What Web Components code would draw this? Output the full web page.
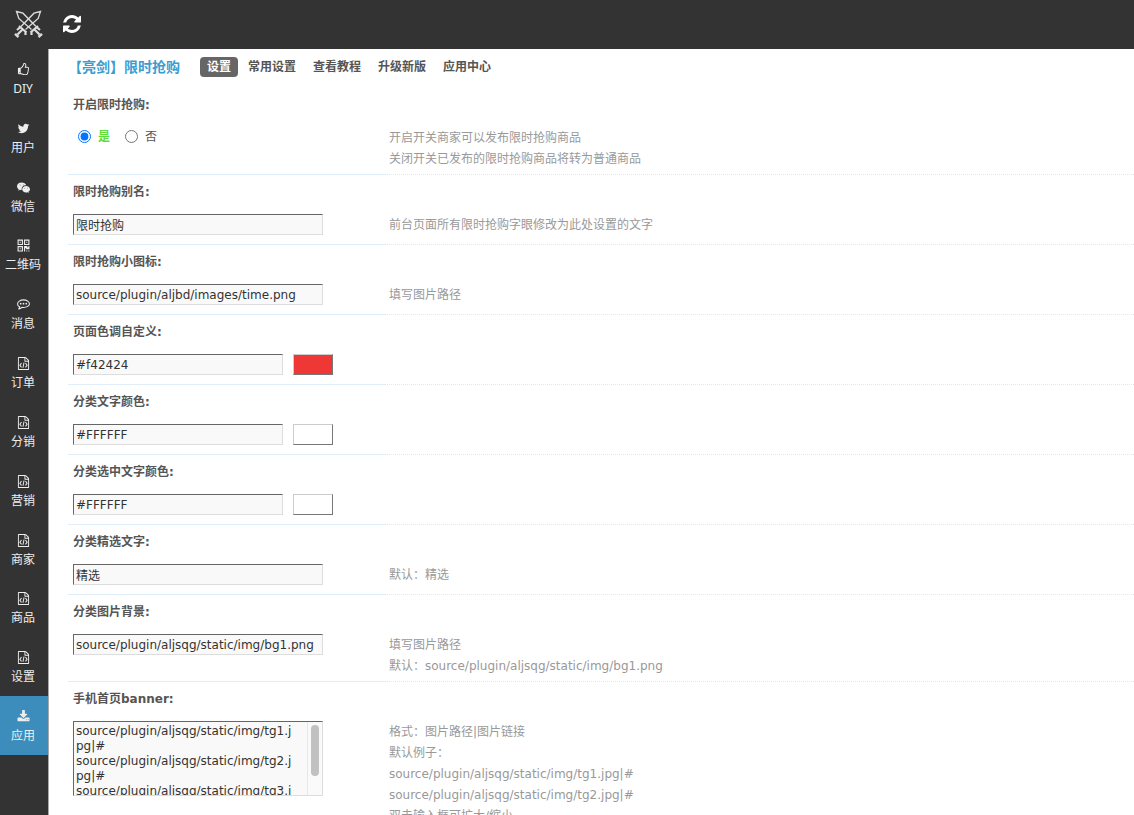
<!DOCTYPE html>
<html lang="zh-CN">
<head>
<meta charset="utf-8">
<title>限时抢购 - 设置</title>
<style>
html, body { margin: 0; height: 100%; }
body { font: 12px/21px "DejaVu Sans", "Noto Sans CJK SC", sans-serif; color: #555; background: #fff; }
</style>
</head>
<body>
<admin-shell>
  <app-header slot="header"></app-header>
  <side-nav slot="nav">
    <nav-item icon="thumb">DIY</nav-item>
    <nav-item icon="twitter">用户</nav-item>
    <nav-item icon="wechat">微信</nav-item>
    <nav-item icon="qrcode">二维码</nav-item>
    <nav-item icon="comment">消息</nav-item>
    <nav-item icon="file">订单</nav-item>
    <nav-item icon="file">分销</nav-item>
    <nav-item icon="file">营销</nav-item>
    <nav-item icon="file">商家</nav-item>
    <nav-item icon="file">商品</nav-item>
    <nav-item icon="file">设置</nav-item>
    <nav-item icon="download" active>应用</nav-item>
  </side-nav>
  <page-tabs heading="【亮剑】限时抢购">
    <tab-link active>设置</tab-link>
    <tab-link>常用设置</tab-link>
    <tab-link>查看教程</tab-link>
    <tab-link>升级新版</tab-link>
    <tab-link>应用中心</tab-link>
  </page-tabs>
  <setting-row type="radio" label="开启限时抢购:">开启开关商家可以发布限时抢购商品<br>关闭开关已发布的限时抢购商品将转为普通商品</setting-row>
  <setting-row type="text" label="限时抢购别名:" value="限时抢购">前台页面所有限时抢购字眼修改为此处设置的文字</setting-row>
  <setting-row type="text" label="限时抢购小图标:" value="source/plugin/aljbd/images/time.png">填写图片路径</setting-row>
  <setting-row type="color" label="页面色调自定义:" value="#f42424" swatch="#ef3835"></setting-row>
  <setting-row type="color" label="分类文字颜色:" value="#FFFFFF" swatch="#fff"></setting-row>
  <setting-row type="color" label="分类选中文字颜色:" value="#FFFFFF" swatch="#fff"></setting-row>
  <setting-row type="text" label="分类精选文字:" value="精选">默认：精选</setting-row>
  <setting-row type="text" label="分类图片背景:" value="source/plugin/aljsqg/static/img/bg1.png">填写图片路径<br>默认：source/plugin/aljsqg/static/img/bg1.png</setting-row>
  <setting-row type="textarea" label="手机首页banner:" value="source/plugin/aljsqg/static/img/tg1.jpg|#&#10;source/plugin/aljsqg/static/img/tg2.jpg|#&#10;source/plugin/aljsqg/static/img/tg3.jpg|#&#10;">格式：图片路径|图片链接<br>默认例子：<br>source/plugin/aljsqg/static/img/tg1.jpg|#<br>source/plugin/aljsqg/static/img/tg2.jpg|#<br>双击输入框可扩大/缩小</setting-row>
</admin-shell>

<script>
const ICONS = {
  refresh: ['0 128 1536 1536', '<path d="M1511 1056q0 5-1 7-64 268-268 434.500t-478 166.500q-146 0-282.500-55t-243.500-157l-129 129q-19 19-45 19t-45-19-19-45v-448q0-26 19-45t45-19h448q26 0 45 19t19 45-19 45l-137 137q71 66 161 102t187 36q134 0 250-65t186-179q11-17 53-117 8-23 30-23h192q13 0 22.500 9.500t9.500 22.500zm25-800v448q0 26-19 45t-45 19h-448q-26 0-45-19t-19-45 19-45l138-138q-148-137-349-137-134 0-250 65t-186 179q-11 17-53 117-8 23-30 23h-199q-13 0-22.500-9.500t-9.500-22.500v-7q65-268 270-434.500t480-166.500q146 0 284 55.500t245 156.500l130-129q19-19 45-19t45 19 19 45z"/>'],
  thumb: ['0 0 1792 1792', '<path d="M384 1344q0-26-19-45t-45-19-45 19-19 45 19 45 45 19 45-19 19-45zm1152-576q0-51-39-89.500t-89-38.500h-352q0-58 48-159.500t48-160.500q0-98-32-145t-128-47q-26 26-38 85t-30.500 125.500-59.500 109.500q-22 23-77 91-4 5-23 30t-31.500 41-34.500 42.500-40 44-38.500 35.500-40 27-35.500 9h-32v640h32q13 0 31.500 3t33 6.500 38 11 35 11.500 35.500 12.500 29 10.500q211 73 342 73h121q192 0 192-167 0-26-5-56 30-16 47.500-52.500t17.500-73.500-18-69q53-50 53-119 0-25-10-55.500t-25-47.500q32-1 53.500-47t21.500-81zm128-1q0 89-49 163 9 33 9 69 0 77-38 144 3 21 3 43 0 101-60 178 1 139-85 219.500t-227 80.500h-129q-96 0-189.500-22.500t-216.500-65.500q-116-40-138-40h-288q-53 0-90.500-37.500t-37.500-90.500v-640q0-53 37.500-90.500t90.500-37.500h274q36-24 137-155 58-75 107-128 24-25 35.500-85.500t30.500-126.500 62-108q39-37 90-37 84 0 151 32.500t102 101.500 35 186q0 93-48 192h176q104 0 180 76t76 179z"/>'],
  twitter: ['0 0 1792 1792', '<path d="M1684 408q-67 98-162 167 1 14 1 42 0 130-38 259.500t-115.500 248.500-184.500 210.500-258 146-323 54.500q-271 0-496-145 35 4 78 4 225 0 401-138-105-2-188-64.500t-114-159.500q33 5 61 5 43 0 85-11-112-23-185.500-111.500t-73.500-205.500v-4q68 38 146 41-66-44-105-115t-39-154q0-88 44-163 121 149 294.500 238.500t371.500 99.500q-8-38-8-74 0-134 94.500-228.500t228.500-94.500q140 0 236 102 109-21 205-78-37 115-142 178 93-10 186-50z"/>'],
  wechat: ['0 0 14 14', '<path fill-rule="evenodd" d="M5 1.500C2.200 1.500 0 3.300 0 5.600c0 1.300.7 2.400 1.800 3.200L1.300 10.400l1.800-1c.7.200 1.300.3 2 .3-.6-2.800 1.600-5 4.900-5C9.500 2.800 7.500 1.500 5 1.500zM3.300 3.800a.5.500 0 1 1 0 1 .5.500 0 0 1 0-1zm3.400 0a.5.500 0 1 1 0 1 .5.500 0 0 1 0-1z"/><path fill-rule="evenodd" d="M9.800 5.300c-2.400 0-4.200 1.600-4.200 3.500s1.800 3.500 4.200 3.500c.5 0 1-.1 1.500-.2l1.400.8-.4-1.300c1-.7 1.700-1.700 1.700-2.800 0-1.900-1.900-3.500-4.200-3.500zM8.400 7.200a.4.400 0 1 1 0 .8.4.4 0 0 1 0-.8zm2.800 0a.4.400 0 1 1 0 .8.4.4 0 0 1 0-.8z"/>'],
  qrcode: ['128 128 1536 1536', '<path fill-rule="evenodd" d="M192 192h640v640h-640zM320 320v384h384v-384zM448 448h128v128h-128zM960 192h640v640h-640zM1088 320v384h384v-384zM1216 448h128v128h-128zM192 960h640v640h-640zM320 1088v384h384v-384zM448 1216h128v128h-128zM960 960h384v128h128v-128h128v384h-384v-128h-128v384h-128zM1216 1472h128v128h-128zM1472 1472h128v128h-128z"/>'],
  comment: ['0 0 1792 1792', '<path fill="none" stroke="currentColor" stroke-width="144" stroke-linejoin="round" d="M896 260c-460 0-820 255-820 550 0 180 110 325 310 420-20 110-80 200-150 280 180-30 330-110 440-220 75 10 150 16 220 16 460 0 820-230 820-496S1356 260 896 260z"/><circle cx="512" cy="790" r="120"/><circle cx="896" cy="790" r="120"/><circle cx="1280" cy="790" r="120"/>'],
  file: ['0 0 1792 1792', '<path d="M1596 380q28 28 48 76t20 88v1152q0 40-28 68t-68 28h-1344q-40 0-68-28t-28-68v-1600q0-40 28-68t68-28h896q40 0 88 20t76 48zm-444-244v376h376q-10-29-22-41l-313-313q-12-12-41-22zm384 1528v-1024h-416q-40 0-68-28t-28-68v-416h-768v1536h1280z"/><path fill="none" stroke="currentColor" stroke-width="140" d="M620 830L400 1130l220 300M1172 830l220 300-220 300M970 760L822 1480"/>'],
  download: ['0 0 1792 1792', '<path d="M1344 1344q0-26-19-45t-45-19-45 19-19 45 19 45 45 19 45-19 19-45zm256 0q0-26-19-45t-45-19-45 19-19 45 19 45 45 19 45-19 19-45zm128-224v320q0 40-28 68t-68 28h-1472q-40 0-68-28t-28-68v-320q0-40 28-68t68-28h465l135 136q58 56 136 56t136-56l136-136h464q40 0 68 28t28 68zm-325-569q17 41-14 70l-448 448q-18 19-45 19t-45-19l-448-448q-31-29-14-70 17-39 59-39h256v-448q0-26 19-45t45-19h256q26 0 45 19t19 45v448h256q42 0 59 39z"/>']
};
const svg = (name, size) => `<svg width="${size}" height="${size}" viewBox="${ICONS[name][0]}" fill="currentColor" aria-hidden="true">${ICONS[name][1]}</svg>`;

class Base extends HTMLElement {
  connectedCallback() {
    if (this.shadowRoot) return;
    this.attachShadow({ mode: 'open' }).innerHTML = this.render();
  }
}

customElements.define('admin-shell', class extends Base {
  render() {
    return `<style>
      :host { display: grid; grid-template: auto minmax(0, 1fr) / auto minmax(0, 1fr); height: 100vh; }
      slot[name=header] { display: block; grid-column: 1 / -1; }
      slot[name=nav] { display: block; }
      main { overflow-y: auto; scrollbar-width: none; padding-left: 19px; }
    </style>
    <slot name="header"></slot><slot name="nav"></slot><main><slot></slot></main>`;
  }
});

customElements.define('app-header', class extends Base {
  render() {
    const sword = `<path stroke-width="1.300" d="M17.500 20.500L4.800 9.500 2.500 2.500 9 4.200 22 17.500"/><path stroke-width="2.200" d="M16.500 23.500L24 17M20 20L25.500 25.500M17.500 22V26M22.500 18L26 21"/><path stroke-width="2.400" d="M24.500 28L28 24.800"/>`;
    return `<style>
      :host { display: block; background: #333; }
      header { display: flex; align-items: center; gap: 19px; height: 48px; padding: 0 14px 1px; }
      a, button { display: flex; color: #fff; background: none; border: 0; padding: 0; }
      a { color: #ddd; }
    </style>
    <header><a href="#" aria-label="首页"><svg width="30" height="30" viewBox="0 0 30 30" fill="none" stroke="currentColor">
      <g>${sword}</g><g transform="matrix(-1 0 0 1 29 0)">${sword}</g></svg></a>
      <button type="button" aria-label="刷新">${svg('refresh', 18)}</button></header>`;
  }
});

customElements.define('side-nav', class extends Base {
  render() {
    return `<style>
      :host { display: block; height: 100%; background: #333; border-right: 1px solid #aaa; width: 48px; }
      nav { display: grid; grid-template-rows: repeat(12, 1fr); height: 706px; }
    </style><nav><slot></slot></nav>`;
  }
});

customElements.define('nav-item', class extends Base {
  render() {
    return `<style>
      :host { display: block; }
      :host([active]) { background: #3c8dbc; }
      a { display: flex; flex-direction: column; align-items: center; gap: 4px; padding: 14px 2px 0 0; color: #eee;
          font: 12px/18px "Noto Sans", "Noto Sans CJK SC", sans-serif; text-decoration: none; white-space: nowrap; }
    </style><a href="#">${svg(this.getAttribute('icon'), 13)}<span><slot></slot></span></a>`;
  }
});

customElements.define('page-tabs', class extends Base {
  render() {
    return `<style>
      :host { display: flex; align-items: center; height: 35px; margin-bottom: 4px; }
      h1 { margin: 0 20px 0 0; font-size: 14px; line-height: 20px; color: #3c9dd0; white-space: nowrap; }
      nav { display: flex; gap: 3px; }
    </style><h1>${this.getAttribute('heading')}</h1><nav><slot></slot></nav>`;
  }
});

customElements.define('tab-link', class extends Base {
  render() {
    return `<style>
      :host { display: block; }
      a { display: block; padding: 0 7px; border-radius: 4px; font-weight: bold; line-height: 20px; color: #555; text-decoration: none; }
      :host([active]) a { background: #666; color: #fff; }
    </style><a href="#"><slot></slot></a>`;
  }
});

customElements.define('setting-row', class extends Base {
  render() {
    const type = this.getAttribute('type'), label = this.getAttribute('label'), value = this.getAttribute('value') || '';
    const controls = {
      radio: () => `<span class="radios" role="radiogroup" aria-labelledby="title">
        <input type="radio" name="enabled" id="yes" checked><label for="yes" class="on">是</label>
        <input type="radio" name="enabled" id="no"><label for="no">否</label></span>`,
      text: () => `<input class="box" type="text" id="field" value="${value}">`,
      color: () => `<input class="box short" type="text" id="field" value="${value}"><button type="button" aria-label="选择颜色" style="background:${this.getAttribute('swatch')}"></button>`,
      textarea: () => `<div class="box area"><textarea id="field">${value}</textarea><div class="track" aria-hidden="true"><div class="thumb"></div></div></div>`
    };
    const title = type === 'radio' ? `<span id="title" class="title">${label}</span>` : `<label class="title" for="field">${label}</label>`;
    return `<style>
      :host { display: grid; grid-template-columns: 316px minmax(0, 1fr); }
      .title { grid-column: 1 / -1; padding-left: 5px; font-weight: bold; line-height: 34px; color: #555; }
      .control { box-sizing: border-box; display: flex; align-items: flex-start; gap: 10px; padding: 5px 5px 9px; border-bottom: 1px solid #deeffb; }
      .hint { padding: 6px 5px 4px; color: #999; border-bottom: 1px dotted #d6ecfb; }
      .box { box-sizing: border-box; width: 250px; height: 21px; margin: 0; padding: 2px; border: 1px solid; border-color: #666 #ddd #ddd #666;
             border-radius: 0; background: #f9f9f9; color: #333; font: inherit; line-height: 15px; outline: 0; }
      .short { width: 210px; }
      .area { display: flex; height: 75px; padding: 0; }
      textarea { flex: 1; min-width: 0; margin: 0; padding: 2px 12px 2px 2px; border: 0; background: none; color: inherit; font: inherit;
                 resize: none; outline: 0; overflow-y: auto; scrollbar-width: none; word-break: break-all; }
      .track { box-sizing: border-box; width: 15px; padding: 3px 3px 0; border-left: 1px solid #e8e8e8; background: #fafafa; }
      .thumb { width: 8px; height: 51px; border-radius: 4px; background: #c1c1c1; }
      button { box-sizing: border-box; width: 40px; height: 21px; padding: 0; border: 1px solid; border-color: #ccc #777 #777 #ccc; }
      .radios { display: flex; align-items: center; height: 18px; padding-left: 5px; line-height: 18px; }
      .radios input { width: 13px; height: 13px; margin: 0 7px 0 0; }
      .radios label { margin-right: 15px; padding-top: 2px; }
      .on { color: #5fdc3c; font-weight: bold; }
    </style>${title}<div class="control">${controls[type]()}</div><div class="hint"><slot></slot></div>`;
  }
});
</script>
</body>
</html>
